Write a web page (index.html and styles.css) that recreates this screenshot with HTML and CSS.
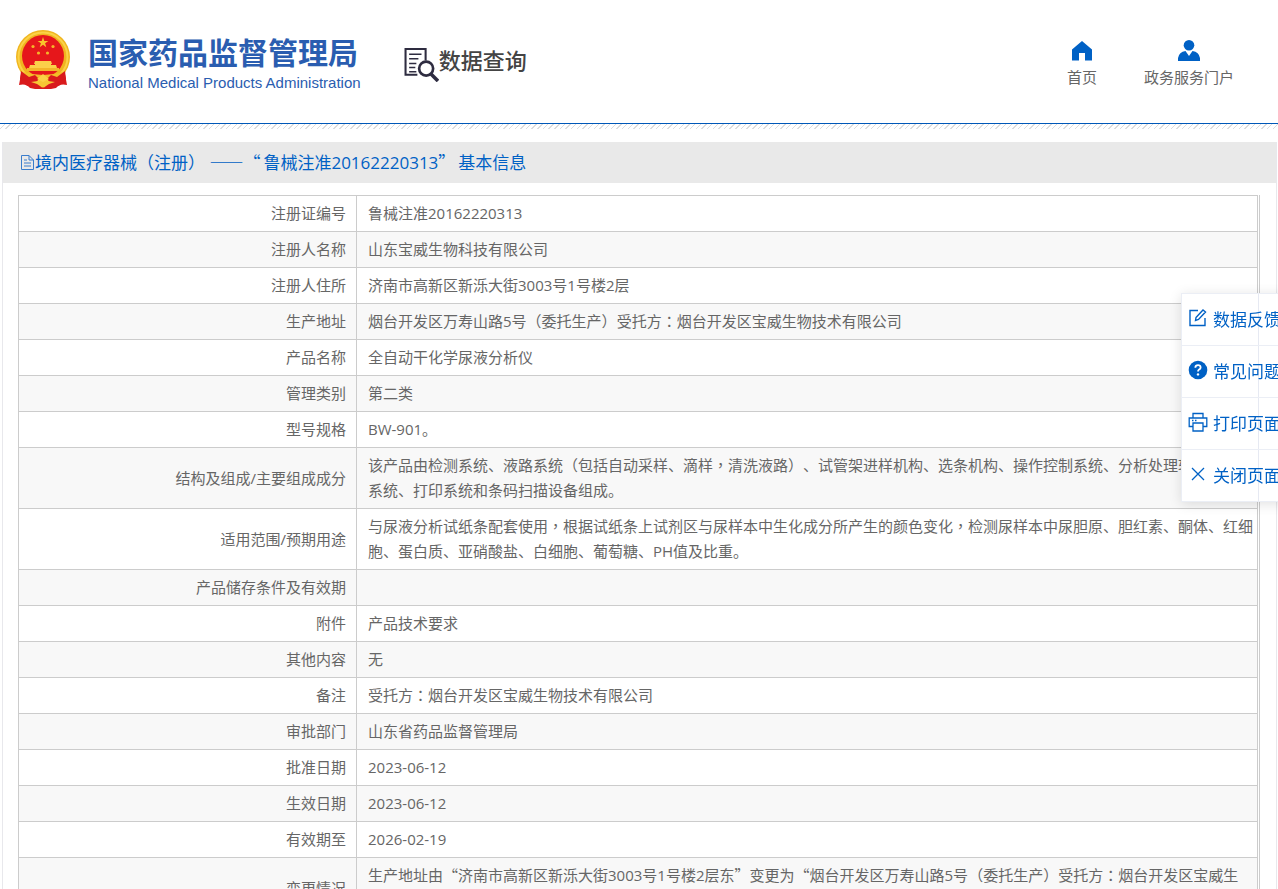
FILE: index.html
```html
<!DOCTYPE html>
<html lang="zh-CN">
<head>
<meta charset="utf-8">
<title>国家药品监督管理局 数据查询</title>
<link rel="stylesheet" href="styles.css">
</head>
<body>
<header class="header">
  <div class="brand">
    <svg class="emblem" viewBox="0 0 56 62" aria-hidden="true">
      <path d="M7 40L4 56q7-2 11 3l5 1h16l5-1q4-5 11-3L49 40z" fill="#d91a1c"/>
      <circle cx="28" cy="28" r="27" fill="#f0b51f"/>
      <circle cx="28" cy="28" r="24.500" fill="none" stroke="#fbd246" stroke-width="2"/>
      <circle cx="28" cy="27" r="21" fill="#e6171b"/>
      <path d="M28 8l1.300 3.900h4.100l-3.300 2.400 1.200 3.900-3.300-2.400-3.300 2.400 1.200-3.900-3.300-2.400h4.100z" fill="#f9c52c"/>
      <g fill="#f5b42a"><circle cx="18" cy="17.500" r="1.600"/><circle cx="38" cy="17.500" r="1.600"/><circle cx="23.500" cy="24" r="1.600"/><circle cx="32.500" cy="24" r="1.600"/></g>
      <path d="M20 32h16l1 3h-1v1h5l1 3H14l1-3h5v-1h-1z" fill="#fbd04a"/>
      <path d="M12 39h32v3H12z" fill="#f3b52a"/>
      <path d="M8 43q20 6 40 0l-5 6-6-2-9 3-9-3-6 2z" fill="#f3bd2a"/>
      <path d="M6 42l8 6 6-2 4 4-7 8-6-2 2-4-8-2zM50 42l-8 6-6-2-4 4 7 8 6-2-2-4 8-2z" fill="#d91a1c"/>
      <path d="M16 53l7-1 5-5 5 5 7 1-6 2-3 2q-3 3-6 0l-3-2z" fill="#f7c634"/>
      <path d="M22 50l6-5 6 5-6 3z" fill="#fbd246"/>
    </svg>
    <div class="brand-text">
      <div class="brand-cn">国家药品监督管理局</div>
      <div class="brand-en">National Medical Products Administration</div>
    </div>
  </div>
  <div class="query">
    <svg class="query-icon" viewBox="0 0 34 34" fill="none" stroke="#2e2c40" aria-hidden="true">
      <path d="M13 27H1.500V2h19.500v11" stroke-width="2"/>
      <path d="M5 7h12M5 11.500h9M5 16h7M5 20h6M5 24h7" stroke-width="1.500"/>
      <circle cx="21.500" cy="21" r="6.800" stroke-width="2.600"/>
      <path d="M26 26l7 7" stroke-width="3.500"/>
    </svg>
    <span>数据查询</span>
  </div>
  <nav class="nav">
    <a href="#"><svg viewBox="0 0 24 24" aria-hidden="true"><path fill="#0061c5" d="M12 2L2 10.500V21.500h7V14h6v7.500h7V10.500z"/></svg>首页</a>
    <a href="#"><svg viewBox="0 0 24 24" aria-hidden="true"><circle cx="12" cy="6.300" r="5.300" fill="#0061c5"/><path fill="#0061c5" d="M8.500 12l3.500 5 3.500-5q6.500 1 7.500 7v3H1v-3q1-6 7.500-7z"/></svg>政务服务门户</a>
  </nav>
</header>
<div class="hatch"></div>

<main class="panel">
  <h1 class="title"><svg viewBox="0 0 16 18" fill="none" stroke="#3a7dcc" aria-hidden="true"><path d="M10 1.500H2.500v14h12V6zM10 1.500V6h4.500M5 6h3M5 9h7M5 12h7"/></svg><span>境内医疗器械<i class="p">（</i>注册<i class="p">）</i> <i class="q">——“</i>鲁械注准20162220313<i class="q">”</i>基本信息</span></h1>
  <div class="table-wrap">
    <table class="info">
      <tbody>
        <tr><th scope="row">注册证编号</th><td>鲁械注准20162220313</td></tr>
        <tr><th scope="row">注册人名称</th><td>山东宝威生物科技有限公司</td></tr>
        <tr><th scope="row">注册人住所</th><td>济南市高新区新泺大街3003号1号楼2层</td></tr>
        <tr><th scope="row">生产地址</th><td>烟台开发区万寿山路5号<i class="p">（</i>委托生产<i class="p">）</i>受托方<i class="p">：</i>烟台开发区宝威生物技术有限公司</td></tr>
        <tr><th scope="row">产品名称</th><td>全自动干化学尿液分析仪</td></tr>
        <tr><th scope="row">管理类别</th><td>第二类</td></tr>
        <tr><th scope="row">型号规格</th><td>BW-901。</td></tr>
        <tr><th scope="row">结构及组成/主要组成成分</th><td>该产品由检测系统、液路系统<i class="p">（</i>包括自动采样、滴样<i class="p">，</i>清洗液路<i class="p">）</i>、试管架进样机构、选条机构、操作控制系统、分析处理软件和控制系统、打印系统和条码扫描设备组成。</td></tr>
        <tr><th scope="row">适用范围/预期用途</th><td>与尿液分析试纸条配套使用<i class="p">，</i>根据试纸条上试剂区与尿样本中生化成分所产生的颜色变化<i class="p">，</i>检测尿样本中尿胆原、胆红素、酮体、红细胞、蛋白质、亚硝酸盐、白细胞、葡萄糖、PH值及比重。</td></tr>
        <tr><th scope="row">产品储存条件及有效期</th><td></td></tr>
        <tr><th scope="row">附件</th><td>产品技术要求</td></tr>
        <tr><th scope="row">其他内容</th><td>无</td></tr>
        <tr><th scope="row">备注</th><td>受托方<i class="p">：</i>烟台开发区宝威生物技术有限公司</td></tr>
        <tr><th scope="row">审批部门</th><td>山东省药品监督管理局</td></tr>
        <tr><th scope="row">批准日期</th><td>2023-06-12</td></tr>
        <tr><th scope="row">生效日期</th><td>2023-06-12</td></tr>
        <tr><th scope="row">有效期至</th><td>2026-02-19</td></tr>
        <tr><th scope="row">变更情况</th><td>生产地址由<i class="q">“</i>济南市高新区新泺大街3003号1号楼2层东<i class="q">”</i>变更为<i class="q">“</i>烟台开发区万寿山路5号<i class="p">（</i>委托生产<i class="p">）</i>受托方<i class="p">：</i>烟台开发区宝威生<span class="keep">物技术</span>有限公司<i class="q">”</i>。</td></tr>
      </tbody>
    </table>
  </div>
</main>

<aside class="tools">
  <button type="button"><span><svg viewBox="0 0 20 20" fill="none" stroke="#0061c5" stroke-width="1.400" aria-hidden="true"><path d="M10 2.500H2v15h15V10M8 9.500l7-7.500 2.500 2-7 7.500-3 1z"/></svg>数据反馈</span></button>
  <button type="button"><span><svg viewBox="0 0 20 20" aria-hidden="true"><circle cx="10" cy="10" r="9.300" fill="#0061c5"/><path d="M7.300 7.700q.2-2.500 2.700-2.500t2.600 2.200q0 1.300-1.500 2.200-1.100.7-1.100 2" fill="none" stroke="#fff" stroke-width="1.800"/><circle cx="10" cy="14.400" r="1.200" fill="#fff"/></svg>常见问题</span></button>
  <button type="button"><span><svg viewBox="0 0 20 20" fill="none" stroke="#0061c5" stroke-width="1.300" aria-hidden="true"><path d="M5 6V1.500h10V6M5 14.500H1.200V6h17.600v8.500H15M5 11h10v8H5zM4 8.500h1.500M7 8.500h1.500"/></svg>打印页面</span></button>
  <button type="button"><span><svg viewBox="0 0 20 20" fill="none" stroke="#0061c5" stroke-width="1.300" aria-hidden="true"><path d="M4 4l12 12M16 4L4 16"/></svg>关闭页面</span></button>
</aside>
</body>
</html>
```

FILE: styles.css
```css
* { box-sizing: border-box; }
body {
  margin: 0;
  overflow-x: hidden;
  background: #fff;
  color: #666;
  font: 15px/25px "Open Sans", "Noto Sans CJK SC", sans-serif;
  text-spacing-trim: space-all;
}
.header {
  display: flex;
  align-items: flex-start;
  height: 124px;
  padding: 29px 44px 0 15px;
  border-bottom: 1px solid #0058b8;
}
.brand { display: flex; gap: 17px; }
.emblem { width: 56px; height: 62px; }
.brand-cn {
  margin-top: 5px;
  color: #2a5db0;
  font-size: 30px;
  font-weight: 700;
  line-height: 37px;
}
.brand-en {
  color: #2a5db0;
  font-family: "Liberation Sans", sans-serif;
  font-size: 15px;
  line-height: 24px;
  white-space: nowrap;
}
.query {
  display: flex;
  align-items: flex-start;
  margin: 18px 0 0 43px;
  color: #444;
  font-size: 22px;
  font-weight: 500;
  line-height: 26px;
}
.query-icon { width: 35px; height: 35px; }
.nav {
  display: flex;
  gap: 47px;
  margin: 10px 0 0 auto;
}
.nav a {
  display: flex;
  flex-direction: column;
  align-items: center;
  color: #666;
  text-decoration: none;
}
.nav svg { width: 24px; height: 24px; margin-bottom: 2px; }
.hatch {
  height: 5px;
  background: repeating-linear-gradient(135deg, #fff 0 3px, #ddd 3px 4px);
}
.panel {
  margin: 13px 1px 0 2px;
  border: 1px solid #e8e8ec;
  border-top: 0;
}
.title {
  display: flex;
  align-items: center;
  height: 41px;
  margin: 0;
  padding-left: 16px;
  background: #e9e9e9;
  color: #0061c5;
  font-size: 17px;
  font-weight: 400;
}
.title svg { width: 16px; height: 18px; }
.p, .q { font-style: normal; line-height: 1; }
/* full-width punctuation centred in its square */
.p { font-family: "Noto Sans CJK TC", sans-serif; font-feature-settings: "locl" 0; }
.q { font-family: "Noto Sans CJK SC", sans-serif; }
.title .q { margin-right: 3px; }
.keep { white-space: nowrap; }
.table-wrap {
  margin: 12px 16px 20px 15px;
  padding-right: 1px;
  border-right: 1px solid #ccc;
}
.info { width: 100%; border-collapse: collapse; }
.info th, .info td {
  height: 36px;
  padding: 5px 10px;
  border: 1px solid #ccc;
  font-weight: 400;
}
.info th { width: 338px; text-align: right; }
.info td { padding: 5px 3px 5px 11px; text-align: left; }
.info tr:nth-child(even) { background: #f8f8f8; }
.tools {
  position: fixed;
  top: 293px;
  right: -23px;
  width: 120px;
  border: 1px solid #ebeef5;
  background: #fff;
  box-shadow: 0 2px 12px rgba(0, 0, 0, .12);
}
.tools button {
  display: block;
  width: 100%;
  height: 52px;
  padding: 0;
  border: 0;
  border-bottom: 1px solid #ebeef5;
  background: none;
  color: #0061c5;
  font: inherit;
  font-size: 17px;
}
.tools button:last-child { height: 51px; border-bottom: 0; }
.tools span {
  display: flex;
  align-items: center;
  gap: 5px;
  width: 77px;
  height: 100%;
  padding-left: 6px;
  border-right: 1px solid #e6e9f2;
  white-space: nowrap;
}
.tools svg { flex: none; width: 20px; height: 20px; margin-bottom: 3px; }
```
